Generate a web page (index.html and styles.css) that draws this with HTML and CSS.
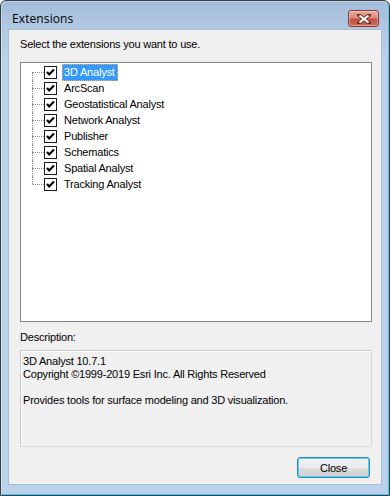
FILE: index.html
```html
<!DOCTYPE html>
<html>
<head>
<meta charset="utf-8">
<link rel="stylesheet" href="styles.css">
</head>
<body>
<div class="window">
  <div class="titlebar">
    <span class="title">Extensions</span>
    <button class="close-x" aria-label="Close">
      <svg width="14" height="10" viewBox="0 0 14 10">
        <path d="M2 1 L12 9 M12 1 L2 9" stroke="#6b2a22" stroke-width="3.6" stroke-linecap="square" fill="none"/>
        <path d="M2.5 1.5 L11.5 8.5 M11.5 1.5 L2.5 8.5" stroke="#ffffff" stroke-width="2.2" fill="none"/>
      </svg>
    </button>
  </div>
  <div class="client">
    <div class="label">Select the extensions you want to use.</div>
    <div class="tree">
      <div class="row first"><span class="elbow"><span class="up"></span><span class="down"></span></span><span class="cb"><svg width="13" height="13" viewBox="0 0 13 13"><rect x="0.5" y="0.5" width="12" height="12" fill="#fff" stroke="#1c1c1c"/><path d="M3 6 L5.2 8.4 L10 3.4" stroke="#000" stroke-width="2.2" fill="none"/></svg></span><span class="name selected">3D Analyst</span></div>
      <div class="row"><span class="elbow"><span class="up"></span><span class="down"></span></span><span class="cb"><svg width="13" height="13" viewBox="0 0 13 13"><rect x="0.5" y="0.5" width="12" height="12" fill="#fff" stroke="#1c1c1c"/><path d="M3 6 L5.2 8.4 L10 3.4" stroke="#000" stroke-width="2.2" fill="none"/></svg></span><span class="name">ArcScan</span></div>
      <div class="row"><span class="elbow"><span class="up"></span><span class="down"></span></span><span class="cb"><svg width="13" height="13" viewBox="0 0 13 13"><rect x="0.5" y="0.5" width="12" height="12" fill="#fff" stroke="#1c1c1c"/><path d="M3 6 L5.2 8.4 L10 3.4" stroke="#000" stroke-width="2.2" fill="none"/></svg></span><span class="name">Geostatistical Analyst</span></div>
      <div class="row"><span class="elbow"><span class="up"></span><span class="down"></span></span><span class="cb"><svg width="13" height="13" viewBox="0 0 13 13"><rect x="0.5" y="0.5" width="12" height="12" fill="#fff" stroke="#1c1c1c"/><path d="M3 6 L5.2 8.4 L10 3.4" stroke="#000" stroke-width="2.2" fill="none"/></svg></span><span class="name">Network Analyst</span></div>
      <div class="row"><span class="elbow"><span class="up"></span><span class="down"></span></span><span class="cb"><svg width="13" height="13" viewBox="0 0 13 13"><rect x="0.5" y="0.5" width="12" height="12" fill="#fff" stroke="#1c1c1c"/><path d="M3 6 L5.2 8.4 L10 3.4" stroke="#000" stroke-width="2.2" fill="none"/></svg></span><span class="name">Publisher</span></div>
      <div class="row"><span class="elbow"><span class="up"></span><span class="down"></span></span><span class="cb"><svg width="13" height="13" viewBox="0 0 13 13"><rect x="0.5" y="0.5" width="12" height="12" fill="#fff" stroke="#1c1c1c"/><path d="M3 6 L5.2 8.4 L10 3.4" stroke="#000" stroke-width="2.2" fill="none"/></svg></span><span class="name">Schematics</span></div>
      <div class="row"><span class="elbow"><span class="up"></span><span class="down"></span></span><span class="cb"><svg width="13" height="13" viewBox="0 0 13 13"><rect x="0.5" y="0.5" width="12" height="12" fill="#fff" stroke="#1c1c1c"/><path d="M3 6 L5.2 8.4 L10 3.4" stroke="#000" stroke-width="2.2" fill="none"/></svg></span><span class="name">Spatial Analyst</span></div>
      <div class="row last"><span class="elbow"><span class="up"></span><span class="down"></span></span><span class="cb"><svg width="13" height="13" viewBox="0 0 13 13"><rect x="0.5" y="0.5" width="12" height="12" fill="#fff" stroke="#1c1c1c"/><path d="M3 6 L5.2 8.4 L10 3.4" stroke="#000" stroke-width="2.2" fill="none"/></svg></span><span class="name">Tracking Analyst</span></div>
    </div>
    <div class="label desc-label">Description:</div>
    <div class="desc">
      <div>3D Analyst 10.7.1</div>
      <div>Copyright &copy;1999-2019 Esri Inc. All Rights Reserved</div>
      <div class="blank">&nbsp;</div>
      <div>Provides tools for surface modeling and 3D visualization.</div>
    </div>
    <div class="actions">
      <button class="btn">Close</button>
    </div>
  </div>
</div>
</body>
</html>
```

FILE: styles.css
```css
* { box-sizing: border-box; }
html, body { margin: 0; padding: 0; }
body {
  width: 390px;
  height: 496px;
  background: #ffffff;
  font-family: "Liberation Sans", Arial, sans-serif;
  font-size: 11px;
  letter-spacing: -0.2px;
  color: #000;
}
.window {
  width: 390px;
  height: 496px;
  border: 1px solid #3a3f45;
  border-radius: 6px 6px 0 0;
  background: linear-gradient(to bottom, #a3bcd9 0px, #b3cae4 30px, #b9d1ea 60px, #b9d1ea 100%);
  padding: 0 7px 10px 7px;
  display: flex;
  flex-direction: column;
  box-shadow: inset 1px 1px 0 rgba(255,255,255,0.35), inset -1px -1px 0 #4cc6ee;
}
.titlebar {
  height: 29px;
  display: flex;
  align-items: flex-start;
  justify-content: space-between;
  padding: 0 3px 0 4px;
}
.title {
  font-family: "Open Sans", "Noto Sans", sans-serif;
  font-size: 12px;
  line-height: 16px;
  margin-top: 10px;
  color: #000;
  letter-spacing: 0.1px;
}
.close-x {
  margin-top: 9px;
  width: 31px;
  height: 17px;
  padding: 0;
  border: 1px solid #8a3a33;
  border-radius: 3px;
  background: linear-gradient(to bottom, #e9a99f 0%, #d98a7e 45%, #c3503f 55%, #cb6a5a 100%);
  box-shadow: inset 0 0 0 1px rgba(255,255,255,0.35);
  display: flex;
  align-items: center;
  justify-content: center;
}
.close-x svg { display: block; }
.client {
  flex: 1;
  background: #f0f0f0;
  border: 1px solid #a8bdd4;
  padding: 7px 9px 6px 11px;
  display: flex;
  flex-direction: column;
}
.label {
  line-height: 13px;
  height: 13px;
  white-space: nowrap;
  padding-top: 1px;
}
.tree {
  margin-top: 12px;
  height: 260px;
  background: #fff;
  border: 1px solid #828790;
  padding: 1px 0 0 11px;
}
.row {
  height: 16px;
  display: flex;
  align-items: center;
}
.elbow {
  width: 12px;
  height: 16px;
  display: flex;
  flex-direction: column;
}
.elbow .up {
  height: 8px;
  border-left: 1px dotted #8c8c8c;
}
.elbow .down {
  height: 8px;
  border-left: 1px dotted #8c8c8c;
  border-top: 1px dotted #8c8c8c;
}
.row.first .elbow .up { border-left-color: transparent; }
.row.last .elbow .down { border-left-color: transparent; }
.cb {
  width: 13px;
  height: 13px;
  display: block;
}
.cb svg { display: block; }
.name {
  margin-left: 5px;
  padding: 1px 2px 2px 1px;
  line-height: 12px;
  white-space: nowrap;
  border: 1px solid transparent;
}
.name.selected {
  background: #3399ff;
  color: #fff;
  border: 1px dotted #f6b24d;
}
.desc-label { margin-top: 8px; }
.desc {
  margin-top: 7px;
  height: 97px;
  border: 1px solid #d9d9d9;
  border-top-color: #c9c9c9;
  border-left-color: #c9c9c9;
  box-shadow: inset 1px 1px 0 #ffffff;
  background: #f0f0f0;
  padding: 4px 2px 3px 2px;
}
.desc div {
  line-height: 13px;
  height: 13px;
  white-space: nowrap;
}
.actions {
  margin-top: 10px;
  display: flex;
  justify-content: flex-end;
  padding-right: 2px;
}
.btn {
  width: 73px;
  height: 21px;
  padding: 0;
  font-family: "Liberation Sans", Arial, sans-serif;
  font-size: 11px;
  letter-spacing: -0.2px;
  color: #000;
  border: 1px solid #3c7fb1;
  border-radius: 3px;
  background: linear-gradient(to bottom, #f2f2f2 0%, #ebebeb 50%, #dddddd 51%, #cfcfcf 100%);
  box-shadow: inset 0 0 0 1px #48d8fb;
}
```
